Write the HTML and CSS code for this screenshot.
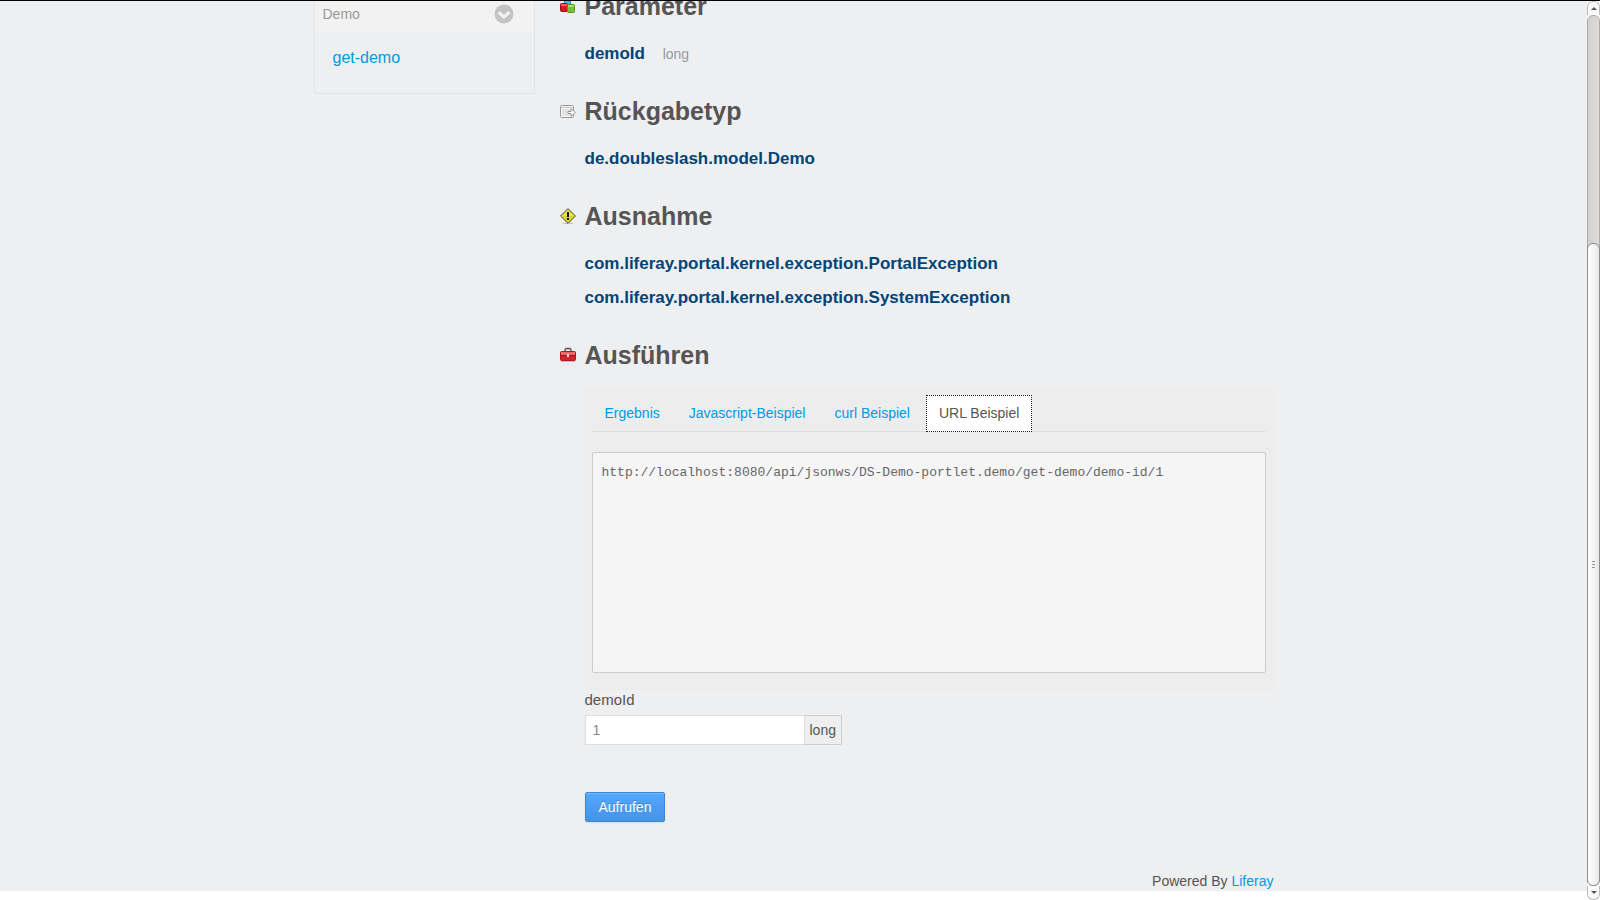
FILE: index.html
```
<!DOCTYPE html>
<html lang="de">

<head>
    <meta charset="UTF-8">
    <title>JSON Web Services</title>
    <link rel="stylesheet" href="styles.css">
</head>

<body>

    <div class="page">
        <div class="container">
            <aside class="sidebar">
                <button class="sidebar-header" type="button">
                    Demo
                    <svg width="20" height="20" viewBox="0 0 20 20" aria-hidden="true">
                        <circle cx="10" cy="10" r="9.5" fill="#c3c3c3" />
                        <path d="M4.7 8.3 L10 13 L15.3 8.3" fill="none" stroke="#f2f2f2" stroke-width="3.2" />
                    </svg>
                </button>
                <ul class="methods">
                    <li><a href="#get-demo">get-demo</a></li>
                </ul>
            </aside>

            <main class="content">
                <section class="block">
                    <h2>
                        <svg width="16" height="16" viewBox="0 0 16 16" aria-hidden="true">
                            <rect x="4.5" y=".5" width="6" height="7" rx="1" fill="#4fb0ee" stroke="#2b86c8" />
                            <rect x=".5" y="5.5" width="7" height="8" rx="1" fill="#dc1420" stroke="#980a14" />
                            <path d="M1 6h6v2H1z" fill="#ee5f62" />
                            <rect x="7.5" y="6.5" width="7" height="8" rx="1" fill="#78bf3c" stroke="#4f9420" />
                            <path d="M8 7h6v2H8z" fill="#aade7c" />
                        </svg>
                        Parameter
                    </h2>
                    <p class="item">demoId <span class="type">long</span></p>
                </section>

                <section class="block">
                    <h2>
                        <svg width="16" height="16" viewBox="0 0 16 16" aria-hidden="true">
                            <rect x=".5" y="2.5" width="13" height="12" rx="1" fill="#fafafa" stroke="#979797" />
                            <path d="M1 4.5h12" stroke="#c4c4c4" />
                            <path d="M2 6h10v7H2z" fill="#e2e2e2" />
                            <path d="M8 8.5h3V5.6L15.4 9.5L11 13.4V10.5H8z" fill="#fff" stroke="#8a8a8a" stroke-width=".9" />
                        </svg>
                        Rückgabetyp
                    </h2>
                    <p class="item">de.doubleslash.model.Demo</p>
                </section>

                <section class="block">
                    <h2>
                        <svg width="16" height="16" viewBox="0 0 16 16" aria-hidden="true">
                            <ellipse cx="8" cy="15.2" rx="6" ry=".8" fill="#c4c4c4" />
                            <path d="M8 .6L15.4 8L8 15.4L.6 8z" fill="#d9d52f" stroke="#4e4e46" stroke-linejoin="round" />
                            <path d="M8 2L14 8H2z" fill="#f0ee76" opacity=".6" />
                            <path d="M7 4h2v5H7zM7 10h2v2H7z" fill="#111" />
                        </svg>
                        Ausnahme
                    </h2>
                    <p class="item">com.liferay.portal.kernel.exception.PortalException</p>
                    <p class="item">com.liferay.portal.kernel.exception.SystemException</p>
                </section>

                <section class="block">
                    <h2>
                        <svg width="16" height="16" viewBox="0 0 16 16" aria-hidden="true">
                            <path d="M5 5V3.2Q5 1.5 6.5 1.5H9.5Q11 1.500 11 3.200V5" fill="none" stroke="#555" stroke-width="1.3" />
                            <rect x=".5" y="4.5" width="15" height="9" rx="1" fill="#d3242a" stroke="#ad1a1e" />
                            <path d="M1 5h14v3H1z" fill="#ea6a6a" />
                            <path d="M1 8h14v1H1z" fill="#a81418" />
                            <path d="M7 7h2v3H7z" fill="#f3dede" />
                            <path d="M1 14.5h14" stroke="#bbb" />
                        </svg>
                        Ausführen
                    </h2>

                    <div class="execute">
                        <div class="panel">
                            <ul class="tabs">
                                <li><a href="#ergebnis">Ergebnis</a></li>
                                <li><a href="#javascript">Javascript-Beispiel</a></li>
                                <li><a href="#curl">curl Beispiel</a></li>
                                <li><a class="active" href="#url">URL Beispiel</a></li>
                            </ul>
                            <textarea class="code" aria-label="URL Beispiel" spellcheck="false" readonly>http://localhost:8080/api/jsonws/DS-Demo-portlet.demo/get-demo/demo-id/1</textarea>
                        </div>

                        <form>
                            <label for="demoId">demoId</label>
                            <div class="field">
                                <input id="demoId" type="text" value="1">
                                <span class="addon">long</span>
                            </div>
                            <button class="submit" type="button">Aufrufen</button>
                        </form>
                    </div>
                </section>

                <footer>Powered By <a href="#liferay">Liferay</a></footer>
            </main>
        </div>
    </div>

    <div class="scrollbar" aria-hidden="true">
        <div class="arrow up"></div>
        <div class="track">
            <div class="thumb"><i></i><i></i><i></i></div>
        </div>
        <div class="arrow down"></div>
    </div>

</body>

</html>
```

FILE: styles.css
```
* {
    box-sizing: border-box;
}

body {
    margin: 0;
    display: flex;
    height: 100vh;
    overflow: hidden;
    border-top: 1px solid #000;
    background-color: #fff;
    color: #555;
    font-family: "Liberation Sans", Arial, sans-serif;
    font-size: 14px;
    line-height: 20px;
}

a {
    color: #009ae5;
    text-decoration: none;
}

ul {
    list-style: none;
    margin: 0;
    padding: 0;
}

.page {
    flex: 1;
    align-self: flex-start;
    background-color: #eeeff1;
}

.container {
    display: flex;
    align-items: flex-start;
    gap: 25px;
    max-width: 960px;
    margin: 0 auto;
}

/* sidebar */

.sidebar {
    width: 221px;
    border: 1px solid #e3e4e6;
    border-top: 0;
    border-radius: 0 0 2px 2px;
}

.sidebar-header {
    display: flex;
    justify-content: space-between;
    align-items: center;
    width: 100%;
    height: 31px;
    padding: 0 20px 6px 8px;
    border: 0;
    background-color: #f2f2f2;
    color: #999;
    font: inherit;
}

.methods {
    padding: 16px 18px 25px;
    font-size: 16px;
}

/* content */

.content {
    flex: 1;
}

.block {
    margin-bottom: 20px;
}

/* the view is scrolled down to the first heading */
.block:first-child {
    margin-top: -15px;
}

h2 {
    display: flex;
    align-items: center;
    gap: 9px;
    margin: 0 0 11px;
    font-size: 25px;
    line-height: 40px;
}

.item {
    margin: 0 0 0 25px;
    color: #047;
    font-size: 17px;
    font-weight: bold;
    line-height: 34px;
}

.type {
    margin-left: 13px;
    color: #999;
    font-size: 14px;
    font-weight: normal;
}

.execute {
    margin: 12px 0 0 25px;
}

.panel {
    padding: 8px 8px 17px 7px;
    border-radius: 4px;
    background-color: #ededed;
}

.tabs {
    display: flex;
    gap: 3px;
    margin-bottom: 20px;
    border-bottom: 1px solid #ddd;
}

.tabs a {
    display: block;
    padding: 7px 12px;
    border: 1px solid transparent;
    margin-bottom: -1px;
    line-height: 21px;
}

.tabs a.active {
    border: 1px dotted #222;
    background-color: #fff;
    color: #555;
}

.code {
    display: block;
    width: 100%;
    height: 221px;
    padding: 10px 9px;
    border: 1px solid #ccc;
    border-radius: 2px;
    outline: 0;
    resize: none;
    background-color: #f5f5f5;
    color: #666;
    font-family: "Liberation Mono", monospace;
    font-size: 13px;
    line-height: 20px;
}

label {
    display: block;
    margin-bottom: 5px;
    font-size: 15px;
}

.field {
    display: flex;
    margin-bottom: 47px;
}

.field input {
    width: 220px;
    height: 30px;
    padding: 4px 7px;
    border: 1px solid #ddd;
    background-color: #fff;
    color: #888;
    font: inherit;
}

.addon {
    padding: 4px 5px;
    border: 1px solid #ccc;
    border-left: 0;
    border-radius: 0 2px 2px 0;
    background-color: #eee;
}

.submit {
    display: block;
    height: 30px;
    padding: 0 13px;
    border: 1px solid #3d86d2;
    border-radius: 2px;
    background-image: linear-gradient(#53a9ff, #4792e6);
    box-shadow: inset 0 1px 0 #77b8fa, 0 1px 2px #ddd;
    color: #fff;
    font: inherit;
    text-shadow: 0 -1px 0 rgba(0, 0, 0, .25);
}

footer {
    margin-top: 49px;
    text-align: right;
}

/* scrollbar */

.scrollbar {
    display: flex;
    flex-direction: column;
    width: 13px;
    background-color: #fff;
}

.arrow {
    display: flex;
    justify-content: center;
    align-items: center;
    height: 14px;
    border: 1px solid #bbb;
    background-color: #fafafa;
}

.arrow::before {
    content: "";
    border: 3px solid transparent;
}

.up {
    border-bottom: 0;
    border-radius: 6px 6px 0 0;
}

.up::before {
    border-top: 0;
    border-bottom-color: #555;
}

.down {
    border-top: 0;
    border-radius: 0 0 6px 6px;
}

.down::before {
    border-bottom: 0;
    border-top-color: #555;
}

.track {
    flex: 1;
    display: flex;
    flex-direction: column;
    justify-content: flex-end;
    border: 1px solid #aaa;
    border-radius: 6px;
    background-image: linear-gradient(to right, #d2d0ce, #dedcda);
}

.thumb {
    display: flex;
    flex-direction: column;
    justify-content: center;
    align-items: center;
    gap: 2px;
    height: 74%;
    margin: 0 -1px -1px;
    border: 1px solid #8c8c8c;
    border-radius: 6px;
    background-image: linear-gradient(to right, #fff, #e8e8e8);
}

.thumb i {
    width: 3px;
    height: 1px;
    background-color: #999;
}
```
